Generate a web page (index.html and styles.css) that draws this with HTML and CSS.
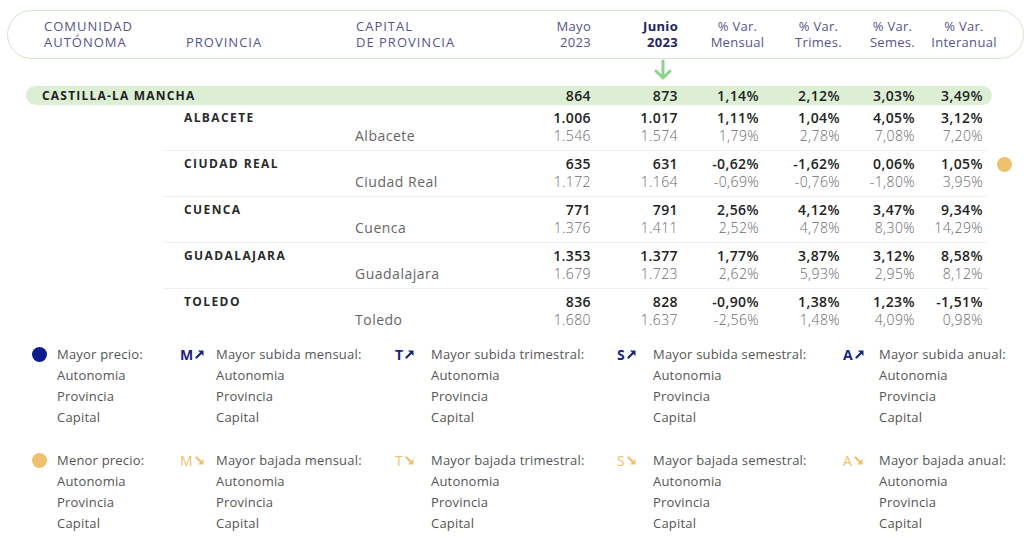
FILE: index.html
```html
<!DOCTYPE html>
<html lang="es">
<head>
<meta charset="utf-8">
<link rel="stylesheet" href="styles.css">
</head>
<body>
<div class="page">
  <div class="head-pill">
    <div class="head-grid">
      <div class="h-cell h-left">COMUNIDAD<br>AUTÓNOMA</div>
      <div class="h-cell h-left">&nbsp;<br>PROVINCIA</div>
      <div class="h-cell h-left h-cap"><span>CAPITAL<br>DE PROVINCIA</span><span class="h-mayo">Mayo<br>2023</span></div>
      <div class="h-cell h-right h-junio">Junio<br>2023</div>
      <div></div>
      <div class="h-cell h-center">% Var.<br>Mensual</div>
      <div class="h-cell h-center">% Var.<br>Trimes.</div>
      <div class="h-cell h-center">% Var.<br>Semes.</div>
      <div class="h-cell h-center">% Var.<br>Interanual</div>
    </div>
  </div>

  <div class="arrow-row">
    <svg width="22" height="22" viewBox="0 0 22 22"><path d="M11 2 V19 M4 12 L11 19 L18 12" fill="none" stroke="#8fd28a" stroke-width="3" stroke-linecap="round" stroke-linejoin="round"/></svg>
  </div>

  <div class="region-pill">
    <div class="region-name">CASTILLA-LA MANCHA</div>
    <div class="num">864</div>
    <div class="num">873</div>
    <div class="num">1,14%</div>
    <div class="num">2,12%</div>
    <div class="num">3,03%</div>
    <div class="num">3,49%</div>
  </div>

  <div class="prov-list">
    <div class="prov-row">
      <div></div>
      <div class="prov">ALBACETE</div>
      <div class="cap">Albacete</div>
      <div class="num2"><b>1.006</b><span>1.546</span></div>
      <div class="num2"><b>1.017</b><span>1.574</span></div>
      <div class="num2"><b>1,11%</b><span>1,79%</span></div>
      <div class="num2"><b>1,04%</b><span>2,78%</span></div>
      <div class="num2"><b>4,05%</b><span>7,08%</span></div>
      <div class="num2"><b>3,12%</b><span>7,20%</span></div>
      <div class="mark"></div>
    </div>
    <div class="prov-row">
      <div></div>
      <div class="prov">CIUDAD REAL</div>
      <div class="cap">Ciudad Real</div>
      <div class="num2"><b>635</b><span>1.172</span></div>
      <div class="num2"><b>631</b><span>1.164</span></div>
      <div class="num2"><b>-0,62%</b><span>-0,69%</span></div>
      <div class="num2"><b>-1,62%</b><span>-0,76%</span></div>
      <div class="num2"><b>0,06%</b><span>-1,80%</span></div>
      <div class="num2"><b>1,05%</b><span>3,95%</span></div>
      <div class="mark"><i class="dot dot-low"></i></div>
    </div>
    <div class="prov-row">
      <div></div>
      <div class="prov">CUENCA</div>
      <div class="cap">Cuenca</div>
      <div class="num2"><b>771</b><span>1.376</span></div>
      <div class="num2"><b>791</b><span>1.411</span></div>
      <div class="num2"><b>2,56%</b><span>2,52%</span></div>
      <div class="num2"><b>4,12%</b><span>4,78%</span></div>
      <div class="num2"><b>3,47%</b><span>8,30%</span></div>
      <div class="num2"><b>9,34%</b><span>14,29%</span></div>
      <div class="mark"></div>
    </div>
    <div class="prov-row">
      <div></div>
      <div class="prov">GUADALAJARA</div>
      <div class="cap">Guadalajara</div>
      <div class="num2"><b>1.353</b><span>1.679</span></div>
      <div class="num2"><b>1.377</b><span>1.723</span></div>
      <div class="num2"><b>1,77%</b><span>2,62%</span></div>
      <div class="num2"><b>3,87%</b><span>5,93%</span></div>
      <div class="num2"><b>3,12%</b><span>2,95%</span></div>
      <div class="num2"><b>8,58%</b><span>8,12%</span></div>
      <div class="mark"></div>
    </div>
    <div class="prov-row last">
      <div></div>
      <div class="prov">TOLEDO</div>
      <div class="cap">Toledo</div>
      <div class="num2"><b>836</b><span>1.680</span></div>
      <div class="num2"><b>828</b><span>1.637</span></div>
      <div class="num2"><b>-0,90%</b><span>-2,56%</span></div>
      <div class="num2"><b>1,38%</b><span>1,48%</span></div>
      <div class="num2"><b>1,23%</b><span>4,09%</span></div>
      <div class="num2"><b>-1,51%</b><span>0,98%</span></div>
      <div class="mark"></div>
    </div>
  </div>

  <div class="legend">
    <div class="leg-item">
      <div class="leg-icon ic-dot"><i class="dot dot-high"></i></div>
      <div class="leg-text">Mayor precio:<br>Autonomia<br>Provincia<br>Capital</div>
    </div>
    <div class="leg-item">
      <div class="leg-icon up">M<svg width="9" height="9" viewBox="0 0 9 9"><path d="M1.5 7.5 L6 3" stroke="currentColor" stroke-width="2.2" stroke-linecap="round"/><path d="M3 0.5 H8.5 V6 Z" fill="currentColor"/></svg></div>
      <div class="leg-text">Mayor subida mensual:<br>Autonomia<br>Provincia<br>Capital</div>
    </div>
    <div class="leg-item">
      <div class="leg-icon up">T<svg width="9" height="9" viewBox="0 0 9 9"><path d="M1.5 7.5 L6 3" stroke="currentColor" stroke-width="2.2" stroke-linecap="round"/><path d="M3 0.5 H8.5 V6 Z" fill="currentColor"/></svg></div>
      <div class="leg-text">Mayor subida trimestral:<br>Autonomia<br>Provincia<br>Capital</div>
    </div>
    <div class="leg-item">
      <div class="leg-icon up">S<svg width="9" height="9" viewBox="0 0 9 9"><path d="M1.5 7.5 L6 3" stroke="currentColor" stroke-width="2.2" stroke-linecap="round"/><path d="M3 0.5 H8.5 V6 Z" fill="currentColor"/></svg></div>
      <div class="leg-text">Mayor subida semestral:<br>Autonomia<br>Provincia<br>Capital</div>
    </div>
    <div class="leg-item">
      <div class="leg-icon up">A<svg width="9" height="9" viewBox="0 0 9 9"><path d="M1.5 7.5 L6 3" stroke="currentColor" stroke-width="2.2" stroke-linecap="round"/><path d="M3 0.5 H8.5 V6 Z" fill="currentColor"/></svg></div>
      <div class="leg-text">Mayor subida anual:<br>Autonomia<br>Provincia<br>Capital</div>
    </div>

    <div class="leg-item">
      <div class="leg-icon ic-dot"><i class="dot dot-low"></i></div>
      <div class="leg-text">Menor precio:<br>Autonomia<br>Provincia<br>Capital</div>
    </div>
    <div class="leg-item">
      <div class="leg-icon down">M<svg width="9" height="9" viewBox="0 0 9 9"><path d="M1.5 1.5 L6 6" stroke="currentColor" stroke-width="2.2" stroke-linecap="round"/><path d="M3 8.5 H8.5 V3 Z" fill="currentColor"/></svg></div>
      <div class="leg-text">Mayor bajada mensual:<br>Autonomia<br>Provincia<br>Capital</div>
    </div>
    <div class="leg-item">
      <div class="leg-icon down">T<svg width="9" height="9" viewBox="0 0 9 9"><path d="M1.5 1.5 L6 6" stroke="currentColor" stroke-width="2.2" stroke-linecap="round"/><path d="M3 8.5 H8.5 V3 Z" fill="currentColor"/></svg></div>
      <div class="leg-text">Mayor bajada trimestral:<br>Autonomia<br>Provincia<br>Capital</div>
    </div>
    <div class="leg-item">
      <div class="leg-icon down">S<svg width="9" height="9" viewBox="0 0 9 9"><path d="M1.5 1.5 L6 6" stroke="currentColor" stroke-width="2.2" stroke-linecap="round"/><path d="M3 8.5 H8.5 V3 Z" fill="currentColor"/></svg></div>
      <div class="leg-text">Mayor bajada semestral:<br>Autonomia<br>Provincia<br>Capital</div>
    </div>
    <div class="leg-item">
      <div class="leg-icon down">A<svg width="9" height="9" viewBox="0 0 9 9"><path d="M1.5 1.5 L6 6" stroke="currentColor" stroke-width="2.2" stroke-linecap="round"/><path d="M3 8.5 H8.5 V3 Z" fill="currentColor"/></svg></div>
      <div class="leg-text">Mayor bajada anual:<br>Autonomia<br>Provincia<br>Capital</div>
    </div>
  </div>
</div>
</body>
</html>
```

FILE: styles.css
```css
* { box-sizing: border-box; }
html, body { margin: 0; padding: 0; background: #fff; }
body {
  font-family: "Open Sans", "Liberation Sans", sans-serif;
  color: #333;
  width: 1031px;
  height: 543px;
  overflow: hidden;
}
.page { padding-top: 10px; }

/* header pill */
.head-pill {
  margin: 0 7px;
  height: 49px;
  border: 1.5px solid #cfe6c6;
  border-radius: 25px;
  padding-top: 7px;
}
.head-grid {
  display: grid;
  grid-template-columns: 142px 170px 235px 87px 20px 79px 83px 65px 78px;
  padding-left: 36px;
  font-size: 13px;
  line-height: 16px;
  color: #56558a;
}
.h-left { letter-spacing: 1px; }
.h-cap { display: flex; justify-content: space-between; }
.h-mayo { text-align: right; letter-spacing: 0.3px; }
.h-right { text-align: right; letter-spacing: 0.3px; }
.h-junio { color: #23235f; font-weight: 700; }
.h-center { text-align: center; letter-spacing: 0.3px; }

/* arrow */
.arrow-row {
  height: 27px;
  padding-left: 652px;
}
.arrow-row svg { display: block; }

/* region pill */
.region-pill {
  margin-left: 26px;
  width: 966px;
  height: 19px;
  background: #dcefd4;
  border-radius: 10px;
  display: grid;
  grid-template-columns: 504px 61px 87px 81px 81px 75px 68px 9px;
  align-items: center;
  font-size: 14px;
  line-height: 19px;
  color: #1e1e1e;
}
.region-name {
  padding-left: 16px;
  font-size: 12px;
  font-weight: 700;
  letter-spacing: 1.2px;
}
.num { text-align: right; font-weight: 600; letter-spacing: 0.4px; }

/* province rows */
.prov-list { margin-left: 163px; width: 824px; }
.prov-row {
  display: grid;
  grid-template-columns: 21px 171px 175px 61px 87px 81px 81px 75px 68px 4px;
  padding: 4px 0 6px;
  border-bottom: 1px solid #eef0ea;
  height: 46px;
  font-size: 14px;
  line-height: 18px;
}
.prov-row.last { border-bottom: 0; }
.prov {
  font-size: 12px;
  font-weight: 700;
  letter-spacing: 1.4px;
  color: #2a2a2a;
}
.cap {
  padding-top: 18px;
  color: #666;
  letter-spacing: 0.5px;
}
.num2 { display: flex; flex-direction: column; align-items: flex-end; letter-spacing: 0.4px; }
.num2 b { font-weight: 600; color: #222; }
.num2 span { font-weight: 300; color: #6a6a6a; }
.mark { width: 4px; }
.mark .dot { margin-left: 14px; margin-top: 2px; }

.dot {
  display: block;
  width: 15px;
  height: 15px;
  border-radius: 50%;
}
.dot-low { background: #efc06e; }
.dot-high { background: #0b1c8c; }

/* legend */
.legend {
  margin-top: 9px;
  display: grid;
  grid-template-columns: 148px 215px 222px 226px 1fr;
  row-gap: 22px;
  padding-left: 32px;
  font-size: 13px;
  line-height: 21px;
  color: #555;
}
.leg-item { display: flex; align-items: flex-start; }
.leg-icon {
  width: 36px;
  flex: none;
  font-weight: 700;
  font-size: 14px;
  line-height: 21px;
  display: flex;
  align-items: center;
  gap: 2px;
}
.leg-icon svg { display: block; }
.leg-icon.ic-dot { width: 25px; height: 21px; }
.leg-icon.up { color: #1a2380; }
.leg-icon.down { color: #efc06e; font-weight: 400; }
.leg-text { letter-spacing: 0.2px; }
```
